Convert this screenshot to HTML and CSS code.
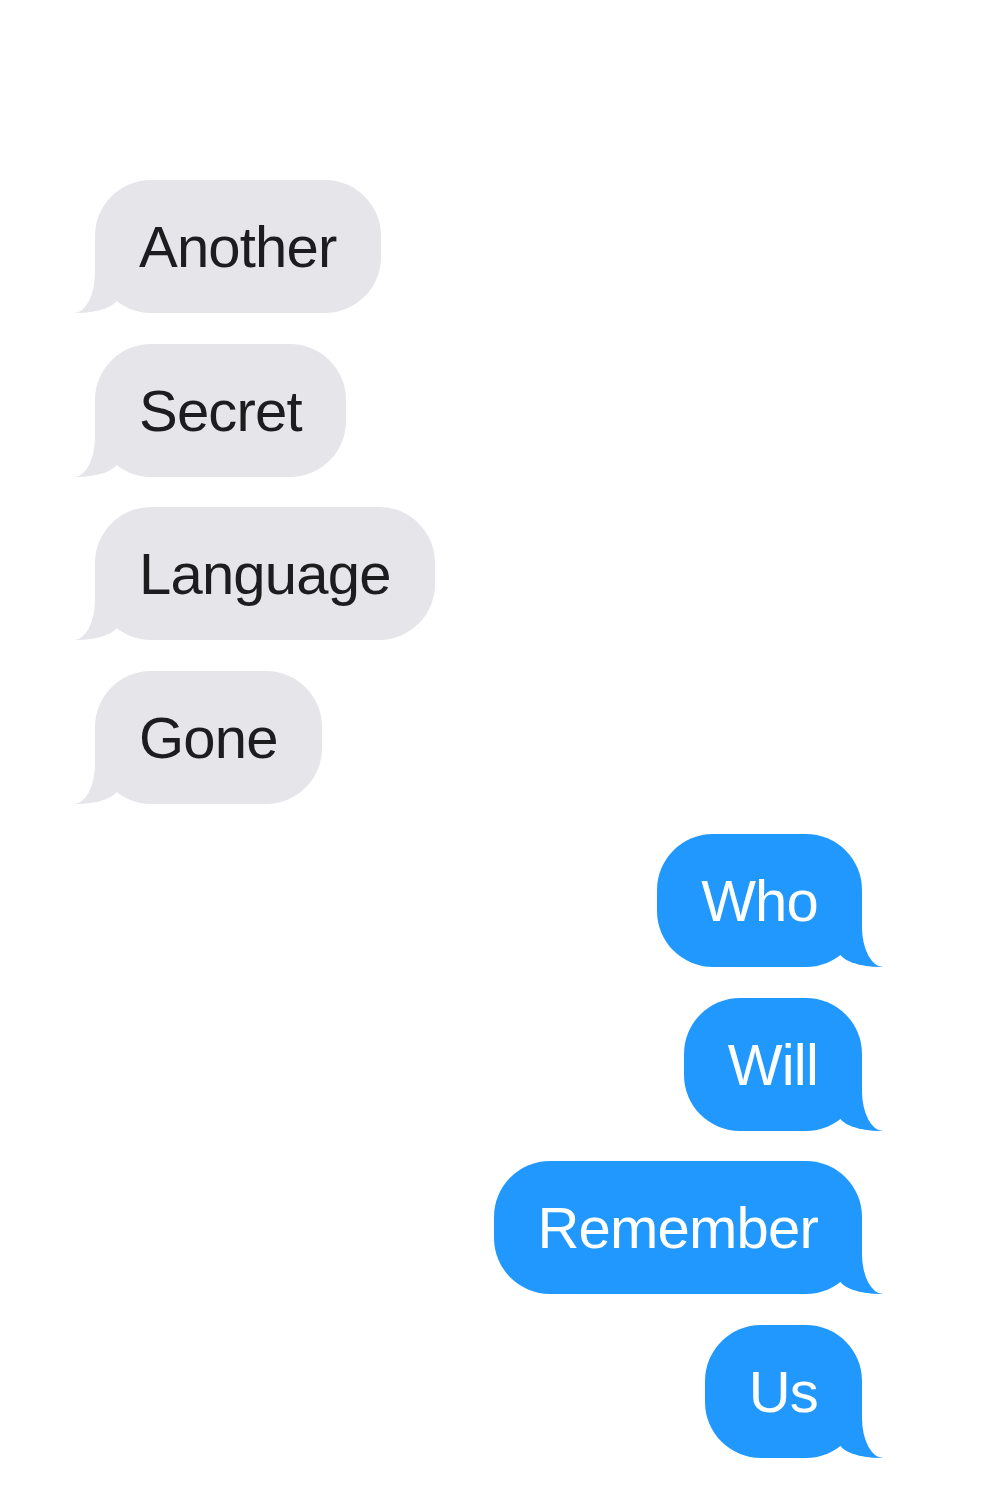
FILE: index.html
```html
<!DOCTYPE html>
<html lang="en">
<head>
<meta charset="utf-8">
<title>Messages</title>
<link rel="stylesheet" href="styles.css">
</head>
<body>
<main class="thread">
  <div class="bubble them">Another</div>
  <div class="bubble them">Secret</div>
  <div class="bubble them">Language</div>
  <div class="bubble them">Gone</div>
  <div class="bubble me">Who</div>
  <div class="bubble me">Will</div>
  <div class="bubble me">Remember</div>
  <div class="bubble me">Us</div>
</main>
</body>
</html>
```
FILE: styles.css
```css
html, body {
  margin: 0;
  padding: 0;
  background: #ffffff;
}

.thread {
  display: flex;
  flex-direction: column;
  gap: 30.5px;
  padding: 180px 139px 0 95px;
}

.bubble {
  position: relative;
  height: 133px;
  line-height: 133px;
  padding: 0 44px;
  border-radius: 56px;
  font-family: "Liberation Sans", Arial, Helvetica, sans-serif;
  font-size: 58px;
  letter-spacing: -0.8px;
  white-space: nowrap;
}

.them {
  align-self: flex-start;
  background: #e5e5ea;
  color: #1d1d1f;
}

.me {
  align-self: flex-end;
  background: #2098fe;
  color: #ffffff;
}

.bubble::before,
.bubble::after {
  content: "";
  position: absolute;
  bottom: 0;
}

.bubble::before {
  width: 44px;
  height: 56px;
  background: inherit;
}

.bubble::after {
  width: 60px;
  height: 64px;
  background: #ffffff;
}

.them::before {
  left: -21px;
  border-bottom-right-radius: 42px 16px;
}

.them::after {
  left: -60px;
  border-bottom-right-radius: 21px 40px;
}

.me::before {
  right: -21px;
  border-bottom-left-radius: 42px 16px;
}

.me::after {
  right: -60px;
  border-bottom-left-radius: 21px 40px;
}
```
